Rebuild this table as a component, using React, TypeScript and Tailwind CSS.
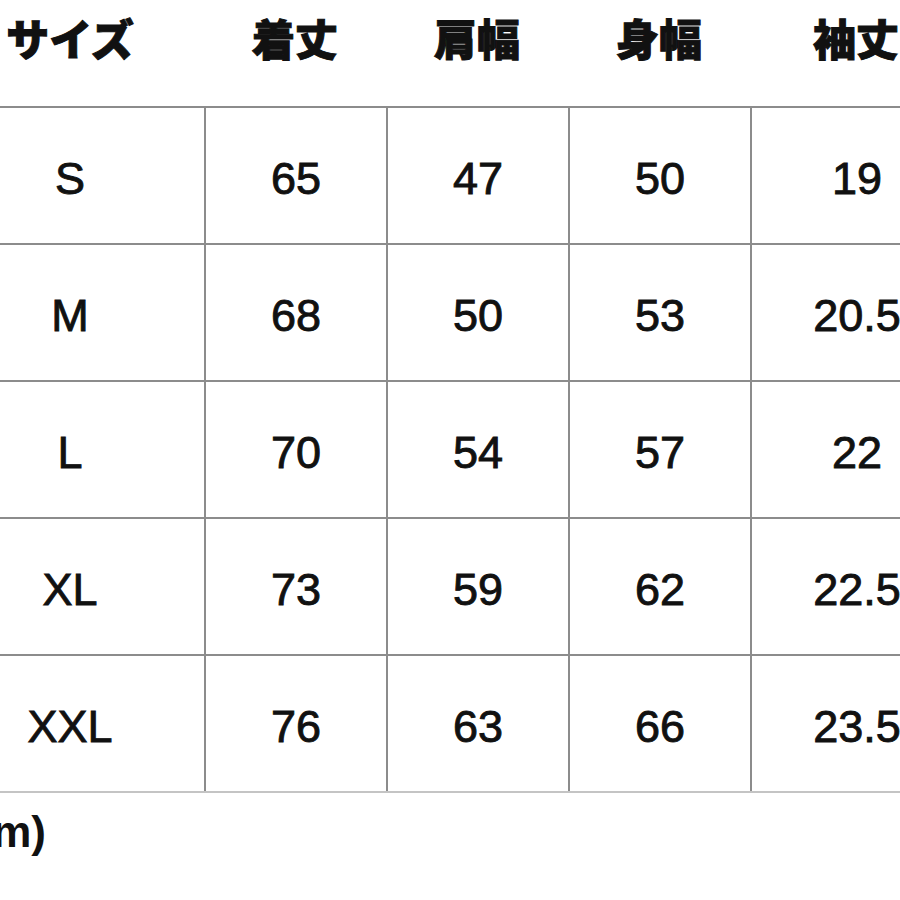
import React from 'react';

const headers = ['サイズ', '着丈', '肩幅', '身幅', '袖丈'];

const rows: string[][] = [
  ['S', '65', '47', '50', '19'],
  ['M', '68', '50', '53', '20.5'],
  ['L', '70', '54', '57', '22'],
  ['XL', '73', '59', '62', '22.5'],
  ['XXL', '76', '63', '66', '23.5'],
];

// column widths; the first one is clipped by the left edge of the picture
const colClass = ['w-[204px] pr-[64px]', 'w-[182px]', 'w-[182px]', 'w-[182px]', 'w-[212px]'];

export default function App() {
  return (
    <div className="w-[900px] h-[900px] overflow-hidden bg-white text-[#111]">
      {/* Header */}
      <div
        className="flex h-[106px] items-center pb-[32px] font-black text-[43px] [-webkit-text-stroke:1px_#111]"
        style={{ fontFamily: '"Noto Sans CJK JP", "Noto Sans", sans-serif' }}
      >
        {headers.map((h, i) => (
          <div key={h} className={`${colClass[i]} shrink-0 text-center`}>
            {h}
          </div>
        ))}
      </div>

      {/* Table body */}
      <div
        className="border-t-2 border-[#8c8c8c] text-[45px] [-webkit-text-stroke:0.9px_#111]"
        style={{ fontFamily: '"Liberation Sans", Arial, sans-serif' }}
      >
        {rows.map((r, ri) => (
          <div
            key={r[0]}
            className={`flex h-[137px] border-b-2 ${ri === rows.length - 1 ? 'border-[#c4c4c4]' : 'border-[#8c8c8c]'}`}
          >
            {r.map((c, ci) => (
              <div
                key={ci}
                className={`${colClass[ci]} shrink-0 flex items-center justify-center pt-[6px] whitespace-nowrap ${ci > 0 ? 'border-l-2 border-[#8c8c8c]' : ''}`}
              >
                {c}
              </div>
            ))}
          </div>
        ))}
      </div>

      {/* Unit note, mostly cut off on the left */}
      <div
        className="flex w-[46px] justify-end whitespace-nowrap pt-[17px] font-bold text-[44px] leading-none"
        style={{ fontFamily: '"Liberation Sans", Arial, sans-serif' }}
      >
        単位(cm)
      </div>
    </div>
  );
}
